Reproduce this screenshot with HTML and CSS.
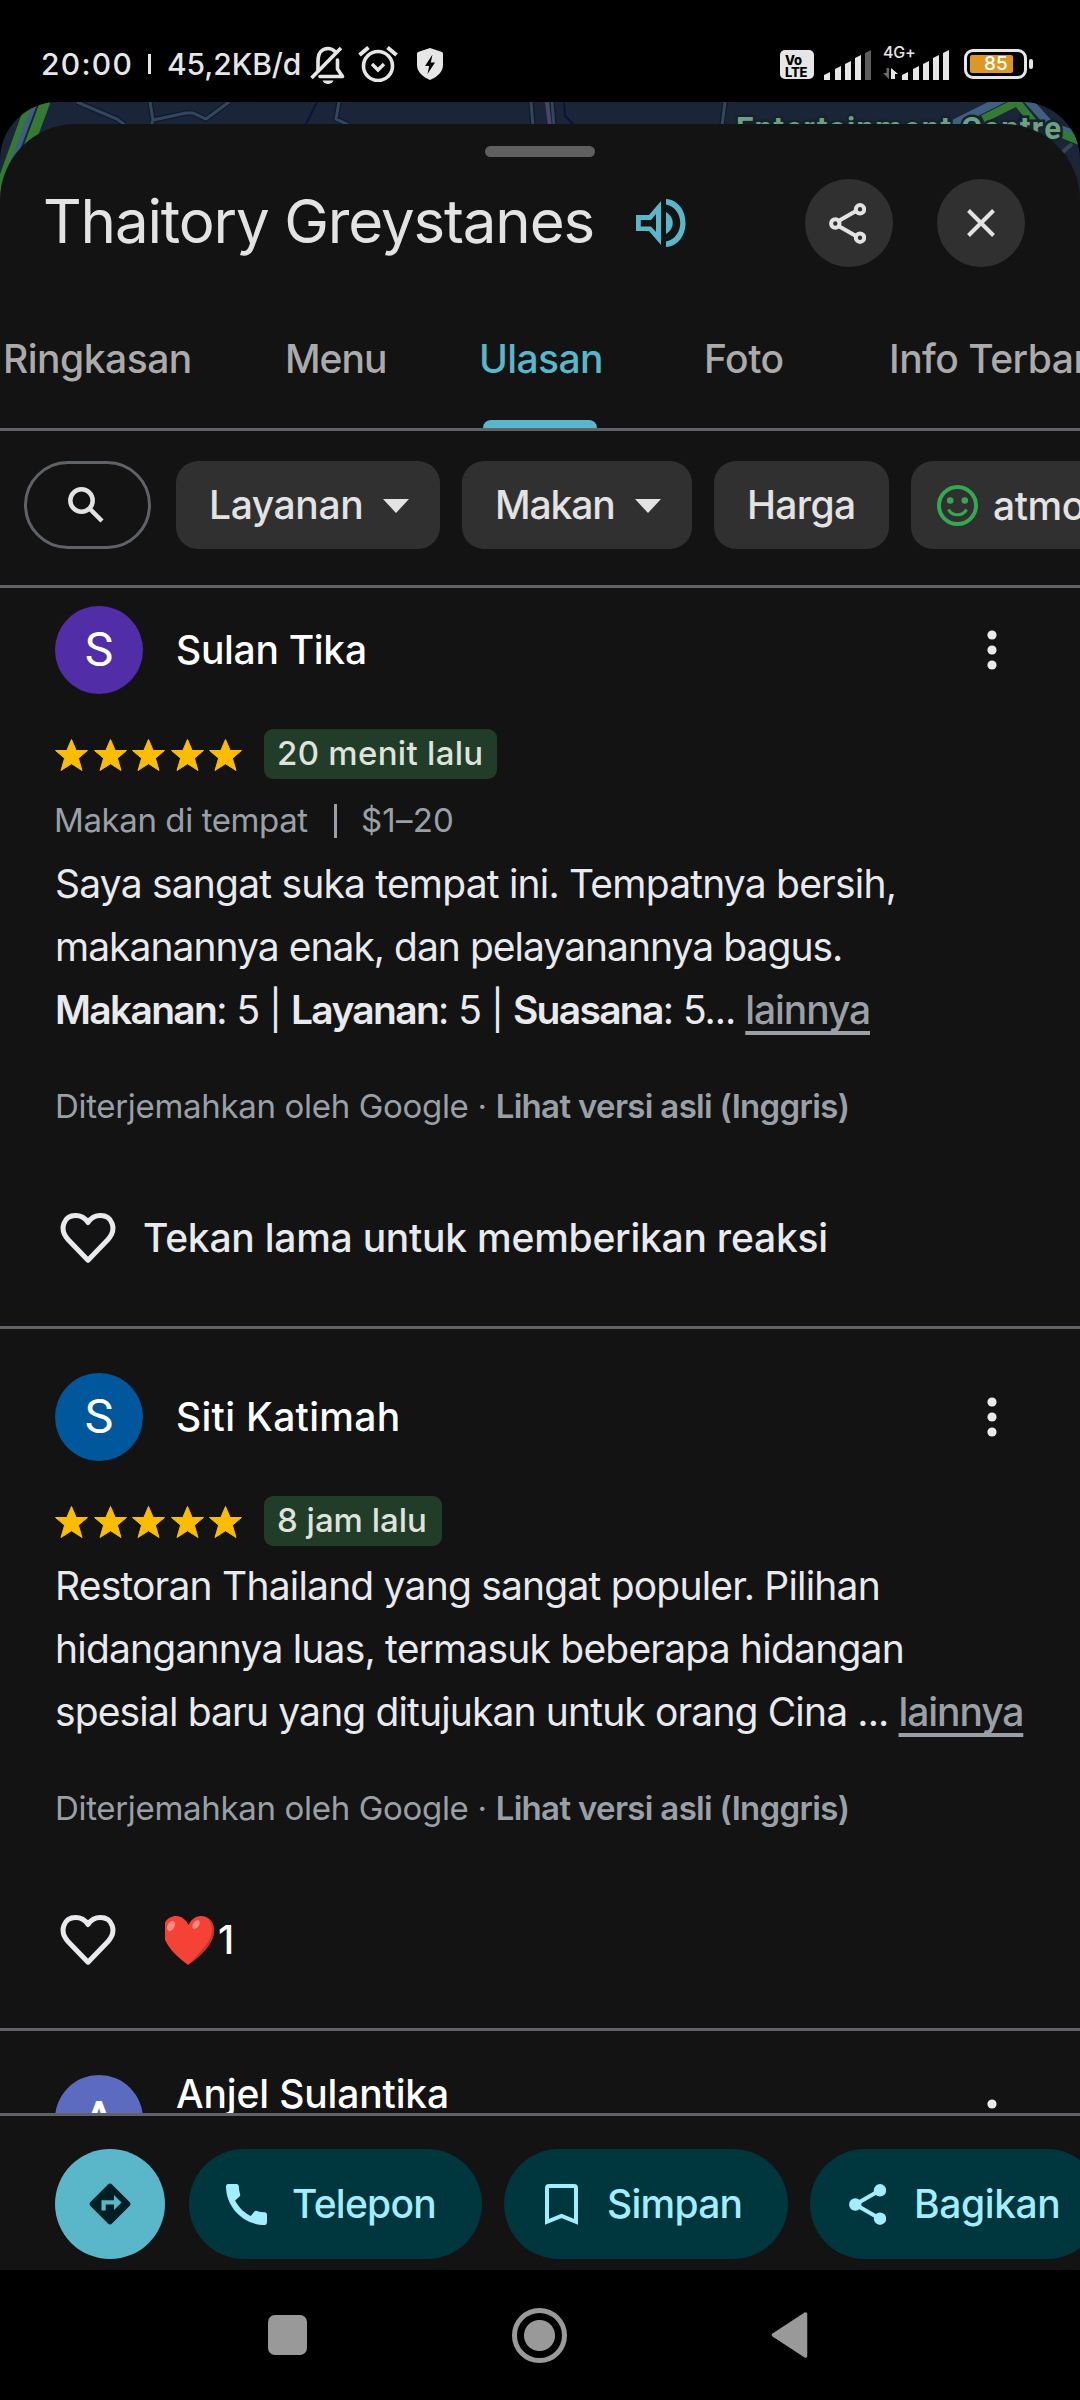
FILE: index.html
```html
<!DOCTYPE html>
<html lang="id">
<head>
<meta charset="utf-8">
<title>Thaitory Greystanes</title>
<link rel="stylesheet" href="styles.css">
</head>
<body>
<svg class="defs" aria-hidden="true">
  <symbol id="star" viewBox="0 0 33 32"><path d="M16.500 0.500l4.700 11h11.300l-9.100 7.700 3.600 12.300-10.500-6.800L6 31.500l3.600-12.300L0.500 11.500h11.300z" stroke="#fbbc04" stroke-width="1" stroke-linejoin="round"/></symbol>
  <symbol id="heart" viewBox="0 0 56 50"><path d="M28 47.200L8 26.500C-1.500 16 4 2.500 15.500 2.500c6 0 10 3 12.500 7 2.500-4 6.500-7 12.500-7C52 2.500 57.500 16 48 26.500z" fill="none" stroke="currentColor" stroke-width="5" stroke-linejoin="round"/></symbol>
  <symbol id="dots" viewBox="0 0 10 40"><circle cx="5" cy="5" r="4.600"/><circle cx="5" cy="20" r="4.600"/><circle cx="5" cy="35" r="4.600"/></symbol>
</svg>

<header class="status">
  <span class="clock">20:00</span><span class="sep"></span><span class="speed">45,2KB/d</span>
  <svg class="bell" viewBox="0 0 35 38" fill="none" stroke="#e6e6e6" stroke-width="3.600"><path d="M8 24V15C8 7 12 2.500 18 2.500c3 0 5 1 7 3M27.500 14v9l5 7.500H10" stroke-linecap="round" stroke-linejoin="round"/><path d="M1.500 32L31 2"/><path d="M12.500 34.500h11c-1.500 4.500-9.500 4.500-11 0z" fill="#e6e6e6" stroke="none"/></svg>
  <svg class="alarm" viewBox="0 0 40 36" fill="none" stroke="#e6e6e6" stroke-width="3.600"><circle cx="20" cy="20" r="14.500"/><path d="M14 18l6 6 6-6" stroke-width="3.400"/><path d="M1.500 9l9-7.500M38.500 9l-9-7.500" stroke-width="4"/></svg>
  <svg class="shield" viewBox="0 0 26 32"><path d="M13 0l12 4q1 .5 1 2v11c0 7-6 12-13 15C6 29 0 24 0 17V6q0-1.500 1-2z" fill="#e6e6e6"/><path d="M15.500 6.500L8 18h4.200l-1.700 8L18 14.500h-4.200z" fill="#000"/></svg>
  <span class="volte"><b>Vo</b><b>LTE</b></span>
  <svg class="bars" viewBox="0 0 48 30" fill="#e6e6e6"><path d="M0 30v-5l6-3v8zM11 30V19l6-3v14zM21 30V14l6-3v19zM31 30V8l6-3v25z"/><path d="M41 30V3l6-3v30z" fill="#5c5c5c"/></svg>
  <span class="net"><span class="gen">4G+</span>
    <svg class="arrows" viewBox="0 0 15 11"><path d="M6 0v11L0 5h3.500V0z" fill="#6a6a6a"/><path d="M8 11V0l7 6h-3v5z" fill="#e6e6e6"/></svg></span>
  <svg class="bars bars2" viewBox="0 0 48 30" fill="#e6e6e6"><path d="M0 30v-5l6-3v8zM11 30V19l6-3v14zM21 30V14l6-3v19zM31 30V8l6-3v25zM41 30V3l6-3v30z"/></svg>
  <span class="battery"><span class="charge">85</span></span><span class="cap"></span>
</header>

<main class="screen">
  <svg class="map" viewBox="0 102 1080 100" aria-hidden="true">
    <g fill="none">
      <path id="roads" d="M77 102l40 17 8 6M150 102l3 18-2 6M153 120l33-7h7l13 6 23-17M339 102l-3 17 13 6M531 102l2 24M552 102l2 24M725 102l-3 24" stroke="#0f1a2b" stroke-width="5.500"/>
      <path d="M77 102l40 17 8 6M150 102l3 18-2 6M153 120l33-7h7l13 6 23-17M339 102l-3 17 13 6M531 102l2 24M552 102l2 24M725 102l-3 24" stroke="#33475b" stroke-width="3"/>
      <path d="M547 102l3 24" stroke="#474769" stroke-width="4"/>
      <path d="M317 102l-12 24M564 102l1 14 10 10M1024 108l-8 20" stroke="#07153a" stroke-width="2"/>
      <path d="M32 100L-4 200M46 100L20 170" stroke="#347a34" stroke-width="10"/>
      <path d="M36 100L6 180" stroke="#3f5d7c" stroke-width="5"/>
      <path d="M945 128l60-30M1026 98l25 28 34 12" stroke="#41607f" stroke-width="8"/>
      <path d="M983 119l34-17 21 26M1060 133l22 9" stroke="#347a34" stroke-width="8"/>
      <path d="M1058 156l14-12" stroke="#33475b" stroke-width="4"/>
    </g>
    <text class="poi" x="736" y="139" textLength="325">Entertainment Centre</text>
  </svg>

  <section class="sheet">
    <div class="handle"></div>
    <div class="titlebar">
      <h1>Thaitory Greystanes</h1>
      <svg class="speaker" viewBox="0 0 50 48" fill="#5ab7ca"><path fill-rule="evenodd" d="M0 16h13L25 2v44L13 32H0zM4.800 21v6.500H15L20 33V15l-5 6z"/><path d="M30 0c26 2 26 46 0 48v-5.500c19-4 19-33 0-37z"/><path d="M30 13c9 5 9 17 0 22z"/></svg>
      <button class="round shift"><svg width="37" height="41" viewBox="0 0 37 41" fill="none" stroke="#e3e3e3" stroke-width="4"><path d="M9.500 18L27 8M9.500 23L27 33"/><circle cx="31" cy="6.300" r="4.200"/><circle cx="6.300" cy="20.500" r="4.200"/><circle cx="31" cy="34.700" r="4.200"/></svg></button>
      <button class="round"><svg width="28" height="28" viewBox="0 0 28 28" stroke="#e3e3e3" stroke-width="4"><path d="M1.500 1.500l25 25M26.500 1.500l-25 25"/></svg></button>
    </div>
    <nav class="tabs">
      <span>Ringkasan</span><span class="menu">Menu</span><span class="active">Ulasan</span><span>Foto</span><span>Info Terbaru</span>
    </nav>
    <div class="filters">
      <button class="search"><svg width="36" height="36" viewBox="0 0 36 36" fill="none" stroke="#e3e3e3" stroke-width="4.500"><circle cx="13.500" cy="13.500" r="11.200"/><path d="M21.500 21.500l12.500 12.500"/></svg></button>
      <button class="chip service">Layanan<i class="caret"></i></button>
      <button class="chip meal">Makan<i class="caret"></i></button>
      <button class="chip price">Harga</button>
      <button class="chip mood"><svg width="41" height="41" viewBox="0 0 41 41" fill="none" stroke="#34a853" stroke-width="4"><circle cx="20.500" cy="20.500" r="18.500"/><path d="M11.500 24.500c3.500 7 14.500 7 18 0" stroke-width="3"/><g fill="#34a853" stroke="none"><circle cx="13.200" cy="15.500" r="3.300"/><circle cx="27.800" cy="15.500" r="3.300"/></g></svg>atmosfer</button>
    </div>

    <div class="reviews">
      <article class="review first">
        <div class="author"><span class="avatar violet">S</span><span class="name">Sulan Tika</span><svg class="more"><use href="#dots"/></svg></div>
        <div class="rating"><span class="stars"><svg><use href="#star"/></svg><svg><use href="#star"/></svg><svg><use href="#star"/></svg><svg><use href="#star"/></svg><svg><use href="#star"/></svg></span><span class="age">20 menit lalu</span></div>
        <div class="meta"><span>Makan di tempat</span><i></i><span class="cost">$1–20</span></div>
        <p class="text">Saya sangat suka tempat ini. Tempatnya bersih,<br><span class="tight">makanannya enak, dan pelayanannya bagus.</span><br><span class="scores"><b>Makanan</b>: 5 | <b>Layanan</b>: 5 | <b>Suasana</b>: 5... <a>lainnya</a></span></p>
        <p class="translated">Diterjemahkan oleh Google · <b>Lihat versi asli (Inggris)</b></p>
        <div class="react"><svg class="heart"><use href="#heart"/></svg><span class="hint">Tekan lama untuk memberikan reaksi</span></div>
      </article>
      <article class="review">
        <div class="author"><span class="avatar blue">S</span><span class="name wide">Siti Katimah</span><svg class="more"><use href="#dots"/></svg></div>
        <div class="rating"><span class="stars"><svg><use href="#star"/></svg><svg><use href="#star"/></svg><svg><use href="#star"/></svg><svg><use href="#star"/></svg><svg><use href="#star"/></svg></span><span class="age short">8 jam lalu</span></div>
        <p class="text">Restoran Thailand yang sangat populer. Pilihan<br>hidangannya luas, termasuk beberapa hidangan<br><span class="last">spesial baru yang ditujukan untuk orang Cina ... <a>lainnya</a></span></p>
        <p class="translated">Diterjemahkan oleh Google · <b>Lihat versi asli (Inggris)</b></p>
        <div class="react"><svg class="heart"><use href="#heart"/></svg>
          <svg class="love" viewBox="2 0 49 49"><path d="M25 49C13 40 0 28 0 14.500 0 5.500 6 0 13 0c6 0 10 4 12.500 9C28 4 32 0 38 0c7 0 13 5.500 13 14.500C51 28 37 40 25 49z" fill="#f44336"/><path d="M43 1c8 6 8 18 0 28-5 7-12 13-18 20 13-9 26-21 26-34.500C51 8 48 3 43 1z" fill="#c33529"/><ellipse cx="8" cy="10" rx="3.500" ry="5.500" transform="rotate(28 8 10)" fill="#ff8a80"/><ellipse cx="33" cy="8.500" rx="3" ry="5" transform="rotate(35 33 8.500)" fill="#ff8a80"/></svg>
          <span class="count">1</span></div>
      </article>
      <article class="review">
        <div class="author"><span class="avatar indigo">A</span><span class="name raised">Anjel Sulantika</span><svg class="more"><use href="#dots"/></svg></div>
      </article>
    </div>

    <div class="actions">
      <button class="directions"><svg width="42" height="42" viewBox="0 0 42 42"><path d="M21 0.500q1 0 2 1l17.500 17.500q2 2 0 4L23 40.500q-2 2-4 0L1.500 23q-2-2 0-4L19 1.500q1-1 2-1z" fill="#001f25"/><path d="M12.500 27.500V17.300h12.500v-5.300l7.500 7.500-7.500 7.500v-5.500h-8.300v6z" fill="#5ab7ca"/></svg></button>
      <button class="pill call"><svg width="41" height="41" viewBox="3 3 18 18" fill="#a2eeff"><path d="M20.010 15.380c-1.230 0-2.420-.2-3.530-.56-.35-.12-.74-.03-1.010.24l-1.570 1.970c-2.830-1.350-5.480-3.900-6.890-6.830l1.950-1.660c.27-.28.35-.67.240-1.020-.37-1.110-.56-2.300-.56-3.530 0-.54-.45-.99-.99-.99H4.190C3.650 3 3 3.240 3 3.990 3 13.280 10.730 21 20.010 21c.71 0 .99-.63.99-1.180v-3.450c0-.54-.45-.99-.99-.99z"/></svg><span>Telepon</span></button>
      <button class="pill save"><svg width="33" height="41" viewBox="0 0 33 41" fill="none" stroke="#a2eeff" stroke-width="4"><path d="M2 37.800V4q0-2 2-2h25q2 0 2 2v33.800L16.500 32z"/></svg><span>Simpan</span></button>
      <button class="pill share"><svg width="37" height="41" viewBox="0 0 37 41" fill="#a2eeff"><path d="M31 6.300L6.300 20.500 31 34.700" fill="none" stroke="#a2eeff" stroke-width="4"/><circle cx="31" cy="6.300" r="6.200"/><circle cx="6.300" cy="20.500" r="6.200"/><circle cx="31" cy="34.700" r="6.200"/></svg><span>Bagikan</span></button>
    </div>
  </section>
</main>

<footer class="navbar">
  <span class="recent"></span>
  <span class="home"></span>
  <svg class="back" viewBox="0 0 36 46"><path d="M34 2v42L2 23z" fill="#999" stroke="#999" stroke-width="3.500" stroke-linejoin="round"/></svg>
</footer>
</body>
</html>
```
FILE: styles.css
```css
* { box-sizing: border-box; }

body {
  margin: 0;
  width: 1080px;
  height: 2400px;
  overflow: hidden;
  background: #000;
  color: #e8eaed;
  font: 39px/1 Inter, sans-serif;
  white-space: nowrap;
}

h1, p { margin: 0; }
button { border: 0; padding: 0; font: inherit; color: inherit; display: flex; align-items: center; flex: none; }
svg { flex: none; display: block; }
.defs { display: none; }

/* status bar */
.status { display: flex; align-items: flex-start; height: 102px; padding-left: 41px; color: #e6e6e6; font-size: 30px; font-weight: 500; }
.status > * { flex: none; }
.clock { width: 106px; margin-top: 49px; letter-spacing: 1.3px; }
.sep { width: 3px; height: 20px; margin: 54px 16px 0 1px; background: #e6e6e6; }
.speed { width: 143px; margin-top: 49px; padding-left: 0; letter-spacing: -0.1px; }
.bell { width: 35px; height: 38px; margin-top: 46px; }
.alarm { width: 40px; height: 36px; margin: 46px 0 0 13px; }
.shield { width: 26px; height: 32px; margin: 48px 337px 0 19px; }
.volte { width: 34px; height: 29px; margin-top: 50px; padding: 4px 0 0 5px; border-radius: 5px; background: #e6e6e6; color: #000; font-size: 13px; line-height: 12px; letter-spacing: -0.2px; }
.volte b { display: block; font-weight: 800; }
.bars { width: 48px; height: 30px; margin: 50px 0 0 10px; }
.net { width: 30px; margin: 45px 0 0 11px; }
.gen { display: block; font-size: 16px; line-height: 15px; letter-spacing: -0.2px; }
.arrows { width: 15px; height: 11px; margin-top: 8px; }
.bars2 { margin-left: -11px; }
.battery { width: 63px; height: 30px; margin: 49px 2px 0 14px; padding: 3px; border: 3px solid #e6e6e6; border-radius: 9px; }
.charge { display: block; width: 43px; height: 18px; padding-left: 14px; border-radius: 2px; background: #dd9722; color: #fff; font-size: 19px; line-height: 18px; }
.cap { width: 4px; height: 10px; margin-top: 59px; border-radius: 2px; background: #e6e6e6; }

/* map strip behind the sheet */
.screen { position: relative; height: 2168px; padding-top: 22px; overflow: hidden; border-radius: 58px 58px 0 0; background: #1a2537; }
.map { position: absolute; left: 0; top: 0; width: 1080px; height: 100px; }
.poi { font: bold 31px Roboto, sans-serif; fill: #70a083; stroke: #16222b; stroke-width: 5px; paint-order: stroke; }

/* place sheet */
.sheet { position: relative; display: flex; flex-direction: column; height: 2146px; overflow: hidden; border-radius: 76px 76px 0 0; background: #131313; }
.handle { flex: none; width: 110px; height: 11px; margin: 22px auto 0 485px; border-radius: 6px; background: #5f5f5f; }
.titlebar { flex: none; display: flex; align-items: center; height: 88px; margin-top: 22px; padding-left: 43px; }
h1 { width: 593px; padding-bottom: 4px; font-size: 60px; font-weight: 400; letter-spacing: -1.15px; color: #e3e3e3; }
.speaker { width: 50px; height: 48px; margin-right: 119px; }
.round { width: 88px; height: 88px; margin-right: 44px; justify-content: center; border-radius: 50%; background: #303030; }
.shift { padding-right: 4px; }

.tabs { flex: none; display: grid; grid-template-columns: 282px 194px 225px 185px 1fr; height: 164px; padding: 72px 0 0 3px; border-bottom: 3px solid #5f6368; color: #ababab; font-weight: 500; line-height: 40px; letter-spacing: -0.5px; }
.menu { letter-spacing: -1px; }
.active { position: relative; letter-spacing: -0.6px; color: #5ab7ca; }
.active::after { content: ""; position: absolute; left: 4px; bottom: 0; width: 114px; height: 8px; border-radius: 8px 8px 0 0; background: #5ab7ca; }

.filters { flex: none; display: flex; height: 157px; padding: 30px 0 0 24px; border-bottom: 3px solid #5f6368; color: #e3e3e3; font-weight: 500; }
.search { width: 127px; height: 88px; margin-right: 25px; padding-left: 41px; border: 3px solid #5f6368; border-radius: 44px; background: none; }
.chip { height: 88px; margin-right: 22px; padding: 0 0 2px 33px; border-radius: 22px; background: #303030; letter-spacing: -0.4px; }
.service { width: 264px; }
.meal { width: 230px; letter-spacing: -1.100px; }
.price { width: 175px; letter-spacing: -0.700px; }
.mood { width: 300px; padding: 0 0 0 26px; gap: 15px; }
.caret { margin: 3px 31px 0 auto; border: 13.500px solid transparent; border-top: 14px solid #e3e3e3; border-bottom: 0; }

/* reviews */
.reviews { flex: 1; overflow: hidden; }
.review { padding: 44px 0 0 55px; border-bottom: 3px solid #5f6368; }
.first { padding-top: 18px; }
.author { display: flex; align-items: center; height: 88px; }
.avatar { flex: none; width: 88px; height: 88px; border-radius: 50%; color: #fff; font: 48px/88px Roboto, sans-serif; text-align: center; }
.violet { background: #512da8; }
.blue { background: #01579b; }
.indigo { background: #5c6bc0; font-weight: 500; }
.name { flex: none; width: 866px; padding: 0 0 1px 33px; color: #fff; font-weight: 500; letter-spacing: -0.3px; }
.wide { letter-spacing: 0.3px; }
.raised { padding-bottom: 51px; letter-spacing: -0.15px; }
.more { width: 10px; height: 40px; margin-left: -22px; fill: #e8eaed; }
.rating { display: flex; align-items: center; height: 50px; margin-top: 35px; }
.stars { display: flex; gap: 5.5px; width: 209px; padding-top: 2px; fill: #fbbc04; }
.stars svg { width: 33px; height: 32px; }
.age { width: 233px; height: 50px; padding-left: 13px; border-radius: 9px; background: #213c29; color: #dfe3dc; font-size: 33px; font-weight: 500; line-height: 48px; letter-spacing: 0.3px; }
.short { width: 178px; letter-spacing: 0; }
.meta { display: flex; align-items: center; height: 44px; margin: 19px 0 -1px; color: #9aa0a6; font-size: 33px; letter-spacing: -0.4px; }
.meta span:first-child { width: 278px; margin-left: -1px; }
.meta i { width: 3px; height: 34px; margin: 2px 24px 0 2px; background: #9aa0a6; }
.cost { letter-spacing: 0.2px; }
.text { margin-top: 8px; line-height: 63px; letter-spacing: -0.8px; color: #e8eaed; }
.meta + .text { margin-top: 11px; }
.tight { letter-spacing: -0.98px; }
.scores { letter-spacing: -1px; }
.text b { font-weight: 600; letter-spacing: -1.700px; }
.last { letter-spacing: -0.86px; }
.text a { color: #9aa0a6; font-weight: 500; letter-spacing: -1.1px; text-decoration: underline; text-decoration-thickness: 3.500px; text-underline-offset: 7px; text-decoration-skip-ink: none; }
.translated { margin: 43px 0 80px; color: #9aa0a6; font-size: 33px; line-height: 44px; letter-spacing: -0.32px; }
.translated b { font-weight: 600; letter-spacing: -0.68px; }
.react { display: flex; align-items: center; height: 60px; margin-bottom: 58px; font-weight: 500; letter-spacing: -0.24px; }
.hint, .count { padding-bottom: 2px; }
.heart { width: 56px; height: 50px; margin: 0 27px 0 5px; }
.love { width: 49px; height: 49px; margin: 0 4px 0 22px; }
.count { color: #fff; }

/* bottom actions */
.actions { flex: none; display: flex; height: 157px; padding: 33px 0 0 55px; border-top: 3px solid #5f6368; color: #a2eeff; font-weight: 500; }
.directions { width: 110px; height: 110px; margin-right: 24px; justify-content: center; border-radius: 50%; background: #5ab7ca; color: #001f25; }
.pill { height: 110px; margin-right: 22px; padding-left: 37px; border-radius: 55px; background: #00363e; letter-spacing: -0.75px; }
.pill span { padding-bottom: 2px; }
.call { width: 293px; gap: 25px; }
.save { width: 284px; padding-left: 41px; gap: 29px; }
.share { width: 292px; padding-left: 39px; gap: 28px; letter-spacing: -0.4px; }

/* system navigation */
.navbar { display: flex; align-items: center; height: 130px; padding-left: 268px; }
.recent { width: 39px; height: 40px; border-radius: 7px; background: #999; }
.home { width: 55px; height: 55px; margin: 0 204px 0 205px; border: 5px solid #999; border-radius: 50%; background: radial-gradient(circle, #999 15px, transparent 16px); }
.back { width: 37px; height: 46px; }
```
